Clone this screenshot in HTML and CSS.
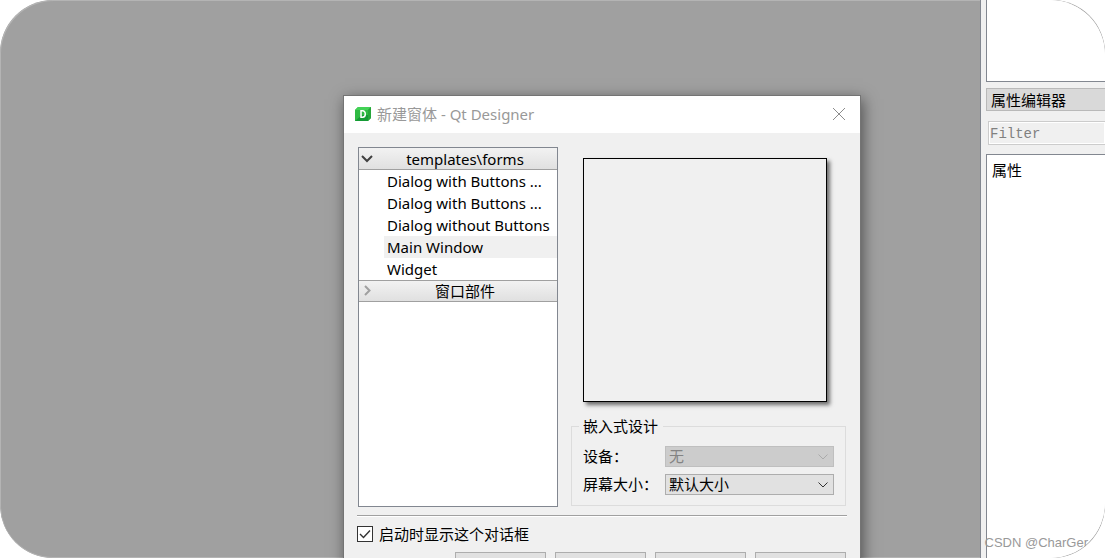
FILE: index.html
```html
<!DOCTYPE html>
<html lang="zh-CN">
<head>
<meta charset="utf-8">
<title>Qt Designer</title>
<link rel="stylesheet" href="styles.css">
</head>
<body>
<div class="screen">
  <main class="workspace">
    <section class="dialog" role="dialog" aria-labelledby="dialog-title">
      <header class="titlebar">
        <svg class="logo" viewBox="0 0 16 14" aria-hidden="true">
          <path d="M3 0H16V11L13 14H0V3Z" fill="#2fba43"/>
          <path d="M3 0H16L13 3H0Z" fill="#43d256"/>
          <path d="M16 0V11L13 14V3Z" fill="#27a53a"/>
          <path d="M0 14L7 8H13V14Z" fill="#159a35"/>
          <path d="M6 3.8V10.2H7.6C9.3 10.2 10.3 9 10.3 7S9.3 3.8 7.6 3.8Z" fill="none" stroke="#fff" stroke-width="1.5"/>
        </svg>
        <h1 class="title" id="dialog-title">新建窗体 - Qt Designer</h1>
        <button class="close" type="button" aria-label="关闭">
          <svg viewBox="0 0 12 12"><path d="M0 0L12 12M12 0L0 12" fill="none" stroke="#8c8c8c"/></svg>
        </button>
      </header>
      <div class="content">
        <div class="columns">
          <div class="tree">
            <button class="branch" type="button" aria-expanded="true">
              <svg class="arrow" viewBox="0 0 12 12"><path d="M1 3L6 8L11 3" fill="none" stroke="#404040" stroke-width="2"/></svg>
              <span class="branch-name">templates\forms</span>
            </button>
            <ul class="items">
              <li class="item">Dialog with Buttons ...</li>
              <li class="item">Dialog with Buttons ...</li>
              <li class="item">Dialog without Buttons</li>
              <li class="item selected">Main Window</li>
              <li class="item">Widget</li>
            </ul>
            <button class="branch second" type="button" aria-expanded="false">
              <svg class="arrow" viewBox="0 0 12 12"><path d="M4 1L8.5 5.5L4 10" fill="none" stroke="#a0a0a0" stroke-width="2"/></svg>
              <span class="branch-name">窗口部件</span>
            </button>
          </div>
          <div class="details">
            <div class="preview"></div>
            <fieldset class="group">
              <legend class="legend">嵌入式设计</legend>
              <div class="field">
                <label class="label" for="device">设备：</label>
                <span class="combo disabled">
                  <select class="select" id="device" disabled><option>无</option></select>
                  <svg class="chevron" viewBox="0 0 10 6"><path d="M.5 .5L5 5L9.5 .5" fill="none" stroke="currentColor"/></svg>
                </span>
              </div>
              <div class="field">
                <label class="label" for="size">屏幕大小：</label>
                <span class="combo">
                  <select class="select" id="size"><option>默认大小</option></select>
                  <svg class="chevron" viewBox="0 0 10 6"><path d="M.5 .5L5 5L9.5 .5" fill="none" stroke="currentColor"/></svg>
                </span>
              </div>
            </fieldset>
          </div>
        </div>
        <hr class="rule">
        <label class="startup">
          <span class="tick">
            <input class="checkbox" type="checkbox" checked>
            <svg class="check" viewBox="0 0 12 10"><path d="M1 5L4.5 8.5L11 1.5" fill="none" stroke="#333" stroke-width="1.4"/></svg>
          </span>
          启动时显示这个对话框
        </label>
        <div class="actions">
          <button class="action" type="button" aria-label="打开"></button>
          <button class="action" type="button" aria-label="最近的"></button>
          <button class="action" type="button" aria-label="关闭"></button>
          <button class="action" type="button" aria-label="创建"></button>
        </div>
      </div>
    </section>
  </main>
  <aside class="dock">
    <div class="inspector"></div>
    <h2 class="dock-title">属性编辑器</h2>
    <input class="filter" type="text" placeholder="Filter" aria-label="Filter">
    <div class="properties">属性</div>
  </aside>
  <span class="watermark">CSDN @CharGer</span>
</div>
</body>
</html>
```
FILE: styles.css
```css
* { box-sizing: border-box; }

body {
  margin: 0;
  background: #fff;
  color: #000;
  font: 15px/22px "Noto Sans", "Noto Sans CJK SC", sans-serif;
}

button, input, select { font: inherit; color: inherit; }

.screen {
  position: relative;
  display: flex;
  height: 100vh;
  overflow: hidden;
  border-radius: 53px;
  background: #a0a0a0;
}

.workspace {
  position: relative;
  flex: 1;
  box-shadow: inset 1px 1px #b4b4b4, inset 0 -1px #b4b4b4;
  border-radius: 53px 0 0 53px;
}

.dialog {
  position: absolute;
  left: 343px;
  top: 95px;
  width: 518px;
  border: 1px solid #747474;
  background: #f0f0f0;
  box-shadow: 2px 4px 14px rgba(0, 0, 0, .5);
}

.titlebar {
  display: flex;
  align-items: center;
  height: 37px;
  padding: 0 15px 1px 11px;
  background: #fff;
}

.logo { width: 16px; height: 14px; }

.title {
  flex: 1;
  margin: 0 0 0 6px;
  color: #999;
  font-size: 15px;
  font-weight: 400;
}

.close {
  display: flex;
  padding: 0;
  border: 0;
  background: none;
}

.close svg { width: 12px; height: 12px; }

.content { padding: 14px 13px; }

.columns {
  display: flex;
  gap: 13px;
  padding: 0 1px;
}

.tree {
  width: 200px;
  height: 360px;
  border: 1px solid #828790;
  background: #fff;
}

.branch {
  display: flex;
  align-items: center;
  width: 100%;
  height: 22px;
  padding: 0 2px;
  border: 0;
  border-bottom: 1px solid #a0a0a0;
  background: linear-gradient(#f2f2f2, #e0e0e0);
}

.second { border-top: 1px solid #a0a0a0; }

.arrow { width: 12px; height: 12px; }

.branch-name { flex: 1; padding-left: 2px; }

.items {
  margin: 0;
  padding: 0 0 0 25px;
  list-style: none;
}

.item {
  height: 22px;
  padding-left: 3px;
  white-space: nowrap;
}

.selected { background: #f0f0f0; }

.details {
  display: flex;
  flex: 1;
  flex-direction: column;
  font-family: "Noto Sans CJK SC", sans-serif;
}

.preview {
  width: 244px;
  height: 244px;
  margin: 11px 0 0 12px;
  border: 1px solid #000;
  box-shadow: 3px 3px 4px rgba(0, 0, 0, .55);
}

.group {
  margin: 13px 0 0;
  padding: 8px 11px 10px;
  border: 1px solid #dcdcdc;
}

.legend {
  margin-left: -4px;
  padding: 0 5px 0 4px;
}

.field {
  display: flex;
  align-items: center;
  height: 22px;
}

.field + .field { margin-top: 6px; }

.label { width: 82px; white-space: nowrap; }

.combo {
  position: relative;
  flex: 1;
  display: flex;
  color: #333;
}

.select {
  width: 100%;
  height: 21px;
  padding: 0 3px 2px;
  border: 1px solid #adadad;
  border-radius: 0;
  background: #e1e1e1;
  color: #000;
  line-height: 17px;
  appearance: none;
}

.disabled { color: #aaa; }

.disabled .select {
  border-color: #bfbfbf;
  background: #ccc;
  color: #838383;
  opacity: 1;
}

.chevron {
  position: absolute;
  right: 6px;
  top: 8px;
  width: 10px;
  height: 6px;
}

.rule {
  height: 2px;
  margin: 8px 0 6px;
  border: 0;
  border-top: 1px solid #a0a0a0;
  background: #fff;
}

.startup {
  display: flex;
  align-items: center;
  gap: 6px;
  height: 22px;
  font-family: "Noto Sans CJK SC", sans-serif;
}

.tick { position: relative; display: flex; }

.checkbox {
  width: 16px;
  height: 16px;
  margin: 0;
  border: 1px solid #333;
  background: #fff;
  appearance: none;
}

.check {
  position: absolute;
  left: 2px;
  top: 3px;
  width: 12px;
  height: 10px;
}

.actions {
  display: flex;
  justify-content: flex-end;
  gap: 9px;
  margin-top: 7px;
  padding-right: 1px;
}

.action {
  width: 91px;
  height: 28px;
  border: 1px solid #adadad;
  background: #e1e1e1;
}

.dock {
  display: flex;
  flex-direction: column;
  width: 125px;
  padding-left: 5px;
  border-left: 1px solid #828790;
  border-radius: 0 55px 55px 0;
  background: #f0f0f0;
  overflow: hidden;
}

.inspector {
  height: 82px;
  border: 1px solid #828790;
  border-width: 0 0 1px 1px;
  background: #fff;
}

.dock-title {
  height: 23px;
  margin: 6px 0 0;
  padding-left: 4px;
  border: 1px solid #b9b9b9;
  border-right: 0;
  background: #d9d9d9;
  font-size: 15px;
  font-weight: 400;
  line-height: 22px;
}

.filter {
  height: 24px;
  margin: 10px 0 9px 2px;
  padding: 2px 1px 0;
  border: 1px solid #ccc;
  border-right: 0;
  border-radius: 0;
  background: #f0f0f0;
  box-shadow: inset 0 0 0 1px #fff;
  font-family: "Liberation Mono", monospace;
  font-size: 14px;
}

.filter::placeholder { color: #808080; }

.properties {
  flex: 1;
  padding: 4px 5px;
  border: 1px solid #828790;
  border-width: 1px 0 0 1px;
  background: #fff;
}

.watermark {
  position: absolute;
  right: 17px;
  bottom: 4px;
  color: #999;
  font: 13px/22px "Liberation Sans", sans-serif;
}
```
